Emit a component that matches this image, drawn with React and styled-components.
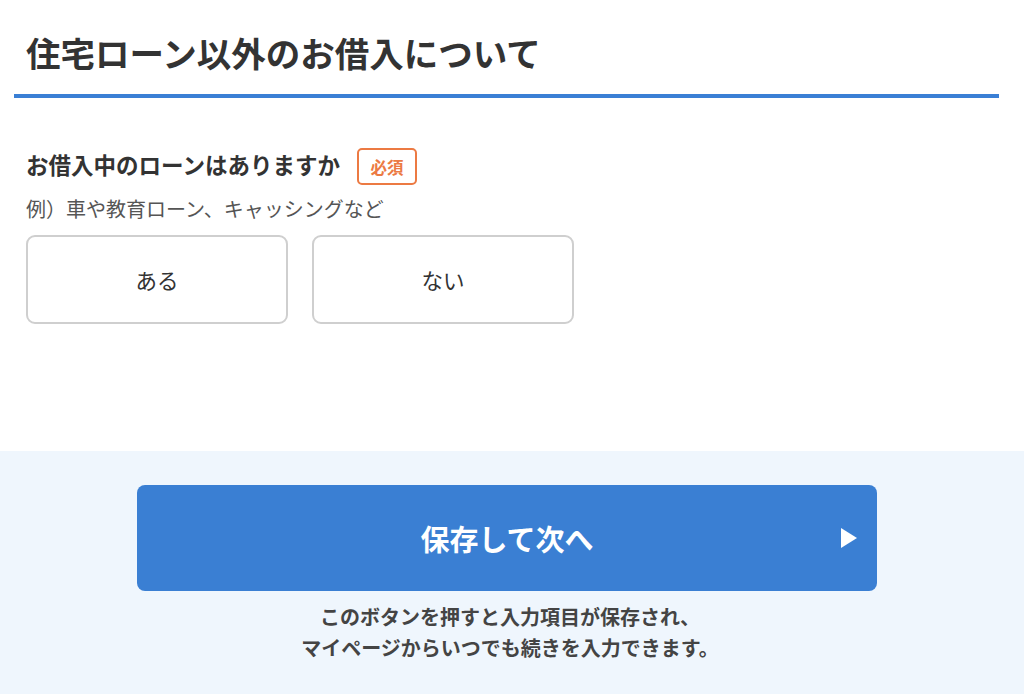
import React from 'react';
import styled, { createGlobalStyle } from 'styled-components';

const GlobalStyle = createGlobalStyle`
    html, body {
        margin: 0;
        padding: 0;
        background: #ffffff;
    }
    body {
        font-family: 'Noto Sans CJK JP', 'Noto Sans', sans-serif;
        color: #333333;
    }
`;

const Page = styled.div`
    width: 1024px;
    height: 694px;
    display: flex;
    flex-direction: column;
    overflow: hidden;
`;

const Main = styled.main`
    flex-grow: 1;
    padding: 0 25px 0 14px;
`;

const Title = styled.h1`
    margin: 0;
    padding: 27px 12px 17px;
    font-size: 34.5px;
    line-height: 50px;
    font-weight: 700;
    color: #333333;
    border-bottom: 4px solid #3a7fd5;
`;

const Question = styled.section`
    padding: 50px 12px 0;
`;

const LabelRow = styled.div`
    display: flex;
    align-items: center;
    gap: 17px;
    height: 37px;
`;

const Label = styled.span`
    font-size: 22.5px;
    font-weight: 700;
    color: #333333;
    margin-bottom: 6px;
`;

const Required = styled.span`
    display: inline-flex;
    align-items: center;
    justify-content: center;
    box-sizing: border-box;
    width: 60px;
    height: 37px;
    border: 2px solid #ec7a43;
    border-radius: 5px;
    color: #ec7a43;
    font-size: 16.5px;
    font-weight: 700;
`;

const Hint = styled.p`
    margin: 9px 0 0;
    font-size: 20px;
    line-height: 30px;
    color: #555555;
`;

const Options = styled.div`
    display: flex;
    gap: 24px;
    margin-top: 11px;
`;

const Option = styled.button`
    width: 262px;
    height: 89px;
    box-sizing: border-box;
    background: #ffffff;
    border: 2px solid #cfcfcf;
    border-radius: 9px;
    font-family: inherit;
    font-size: 21.5px;
    color: #333333;
    cursor: pointer;
`;

const Footer = styled.footer`
    height: 243px;
    background: #eff6fd;
    display: flex;
    flex-direction: column;
    align-items: center;
    padding-top: 34px;
    box-sizing: border-box;
`;

const NextButton = styled.button`
    position: relative;
    width: 740px;
    height: 106px;
    margin-left: -10px;
    background: #3a7fd3;
    border: none;
    border-radius: 8px;
    color: #ffffff;
    font-family: inherit;
    font-size: 29px;
    font-weight: 700;
    cursor: pointer;
`;

const Arrow = styled.svg`
    position: absolute;
    right: 20px;
    top: 50%;
    transform: translateY(-50%);
`;

const Note = styled.p`
    margin: 10px 0 0 -4px;
    font-size: 20px;
    line-height: 31px;
    font-weight: 700;
    color: #444444;
    text-align: center;
`;

export default function App() {
    return (
        <Page>
            <GlobalStyle />
            <Main>
                <Title>住宅ローン以外のお借入について</Title>
                <Question>
                    <LabelRow>
                        <Label>お借入中のローンはありますか</Label>
                        <Required>必須</Required>
                    </LabelRow>
                    <Hint>例）車や教育ローン、キャッシングなど</Hint>
                    <Options>
                        <Option>ある</Option>
                        <Option>ない</Option>
                    </Options>
                </Question>
            </Main>
            <Footer>
                <NextButton>
                    保存して次へ
                    <Arrow width="16" height="20" viewBox="0 0 16 20">
                        <path d="M0 0 L16 10 L0 20 Z" fill="#ffffff" />
                    </Arrow>
                </NextButton>
                <Note>
                    このボタンを押すと入力項目が保存され、
                    <br />
                    マイページからいつでも続きを入力できます。
                </Note>
            </Footer>
        </Page>
    );
}
